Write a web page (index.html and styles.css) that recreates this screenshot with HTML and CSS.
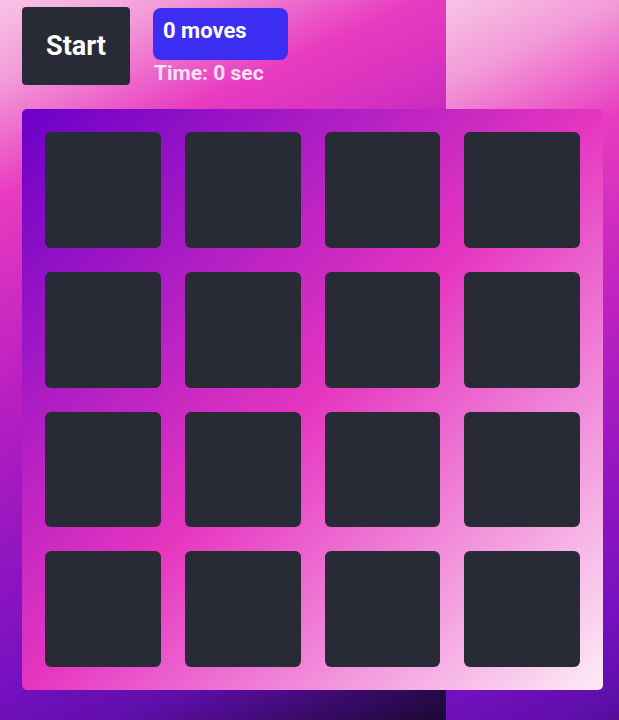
FILE: index.html
```html
<!DOCTYPE html>
<html lang="en">
<head>
    <meta charset="UTF-8">
    <meta name="viewport" content="width=device-width, initial-scale=1.0">
    <title>Memory Game</title>
    <link rel="stylesheet" href="styles.css">
</head>
<body>
    <header class="controls">
        <button class="start-btn" id="start">Start</button>
        <div class="stats">
            <div class="moves" id="moves">0 moves</div>
            <div class="timer" id="timer">Time: 0 sec</div>
        </div>
    </header>

    <main class="board" id="board">
        <div class="card"></div>
        <div class="card"></div>
        <div class="card"></div>
        <div class="card"></div>
        <div class="card"></div>
        <div class="card"></div>
        <div class="card"></div>
        <div class="card"></div>
        <div class="card"></div>
        <div class="card"></div>
        <div class="card"></div>
        <div class="card"></div>
        <div class="card"></div>
        <div class="card"></div>
        <div class="card"></div>
        <div class="card"></div>
    </main>
</body>
</html>
```

FILE: styles.css
```css
* {
    box-sizing: border-box;
}
html {
    background: #1a0833;
}
body {
    margin: 0;
    min-height: 100vh;
    padding: 7px 0 0 22px;
    font-family: Roboto, "Liberation Sans", sans-serif;
    background: linear-gradient(155deg, #f8c4e5 0%, #f29ad8 9%, #e83cc0 21%, #bb20c0 42%, #8c14c0 63%, #7410c0 75%, #5e0ea8 84%, #1a0833 100%);
    background-size: 446px 100%;
    background-repeat: repeat-x;
}
.controls {
    display: flex;
    gap: 23px;
}
.start-btn {
    width: 108px;
    height: 78px;
    border: none;
    border-radius: 4px;
    background-color: #282a36;
    color: #fff;
    font-family: inherit;
    font-size: 27px;
    font-weight: 700;
    cursor: pointer;
}
.stats {
    padding-top: 1px;
}
.moves {
    width: 135px;
    height: 52px;
    padding: 10px 10px;
    border-radius: 8px;
    background-color: #3b2df2;
    color: #fff;
    font-size: 22px;
    font-weight: 700;
}
.timer {
    margin-top: 1px;
    padding-left: 1px;
    color: #fde0f3;
    font-size: 21px;
    font-weight: 700;
}
.board {
    width: 581px;
    height: 581px;
    margin-top: 24px;
    padding: 23px;
    display: grid;
    grid-template-columns: repeat(4, 1fr);
    grid-template-rows: repeat(4, 1fr);
    gap: 24px;
    border-radius: 5px;
    background: linear-gradient(135deg, #6a00c8 0%, #e535c0 50%, #fdebf6 100%);
}
.card {
    border-radius: 6px;
    background-color: #282a36;
}
```
